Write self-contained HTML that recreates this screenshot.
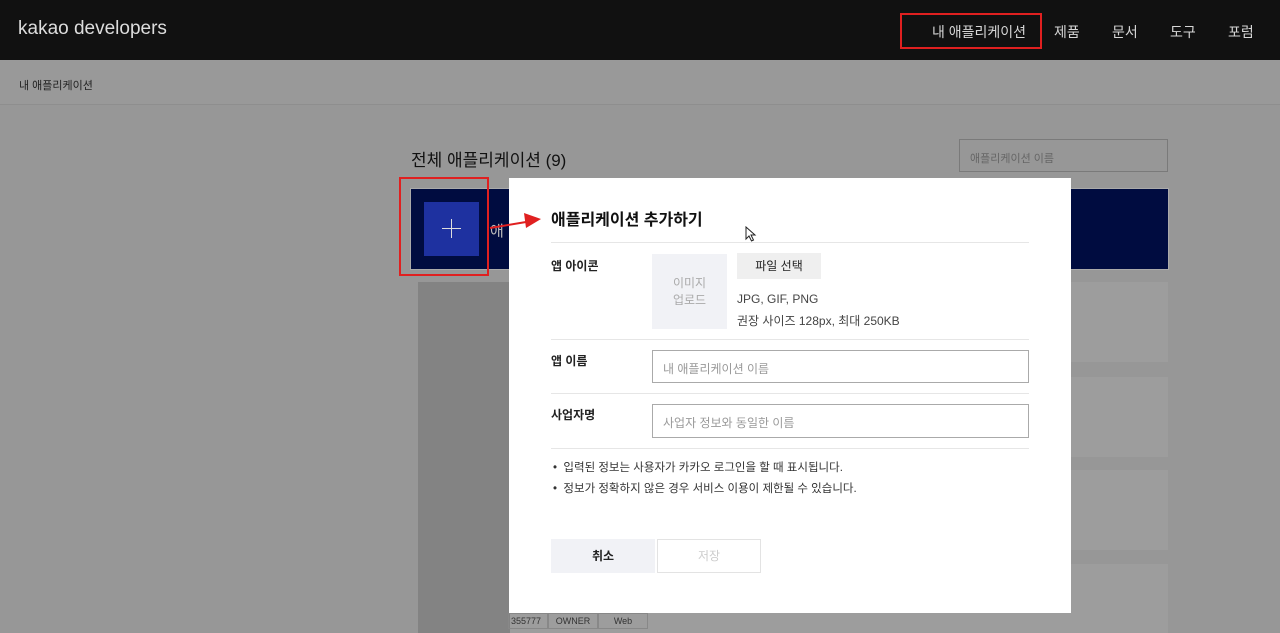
<!DOCTYPE html>
<html><head><meta charset="utf-8"><style>
*{margin:0;padding:0;box-sizing:border-box}
body{width:1280px;height:633px;overflow:hidden;background:#979797;font-family:"Liberation Sans","Noto Sans CJK KR",sans-serif;position:relative}
.a{position:absolute}
</style></head><body>
<div class="a" style="left:0;top:0;width:1280px;height:60px;background:#111"></div>
<div class="a" style="left:18px;top:18px;color:#ddd;font-size:19px;font-family:'Liberation Sans',sans-serif">kakao developers</div>
<div class="a" style="left:900px;top:13px;width:142px;height:36px;border:2px solid #e02020"></div>
<div class="a" style="left:932px;top:22px;color:#d6d6d6;font-size:14px">내 애플리케이션</div>
<div class="a" style="left:1054px;top:22px;color:#d6d6d6;font-size:14px">제품</div>
<div class="a" style="left:1112px;top:22px;color:#d6d6d6;font-size:14px">문서</div>
<div class="a" style="left:1170px;top:22px;color:#d6d6d6;font-size:14px">도구</div>
<div class="a" style="left:1228px;top:22px;color:#d6d6d6;font-size:14px">포럼</div>
<div class="a" style="left:0;top:60px;width:1280px;height:45px;background:#999;border-bottom:1px solid #8e8e8e"></div>
<div class="a" style="left:19px;top:77px;color:#222;font-size:11px">내 애플리케이션</div>
<div class="a" style="left:411px;top:146px;color:#111;font-size:17px">전체 애플리케이션 (9)</div>
<div class="a" style="left:959px;top:139px;width:209px;height:33px;border:1px solid #7a7a7a;color:#666;font-size:11px;padding:10px 10px">애플리케이션 이름</div>
<div class="a" style="left:410px;top:188px;width:759px;height:82px;background:#000c40;border:1px solid #aaa"></div>
<div class="a" style="left:424px;top:202px;width:55px;height:54px;background:#1e31a0"></div>
<div class="a" style="left:442px;top:228px;width:19px;height:1px;background:#ddd"></div>
<div class="a" style="left:451px;top:219px;width:1px;height:19px;background:#ddd"></div>
<div class="a" style="left:490px;top:220px;color:#bbb;font-size:15px">애</div>
<div class="a" style="left:399px;top:177px;width:90px;height:99px;border:2px solid #e02020"></div>
<div class="a" style="left:420px;top:282px;width:748px;height:80px;background:#9d9d9d"></div>
<div class="a" style="left:420px;top:377px;width:748px;height:80px;background:#9d9d9d"></div>
<div class="a" style="left:420px;top:470px;width:748px;height:80px;background:#9d9d9d"></div>
<div class="a" style="left:420px;top:564px;width:748px;height:69px;background:#9d9d9d"></div>
<div class="a" style="left:418px;top:282px;width:92px;height:351px;background:#838383"></div>
<div class="a" style="left:508px;top:613px;width:140px;height:16px;font-size:9px;color:#333;display:flex"><span style="width:40px;border:1px solid #888;padding:2px">355777</span><span style="width:50px;border:1px solid #888;padding:2px;text-align:center">OWNER</span><span style="width:50px;border:1px solid #888;padding:2px;text-align:center">Web</span></div>
<div class="a" style="left:509px;top:178px;width:562px;height:435px;background:#fff"></div>
<svg class="a" style="left:488px;top:206px" width="56" height="26"><line x1="2" y1="22" x2="38" y2="16" stroke="#e02020" stroke-width="2"/><polygon points="53,13 36,7 38,22" fill="#e02020"/></svg>
<div class="a" style="left:551px;top:206px;color:#111;font-size:16px;font-weight:bold">애플리케이션 추가하기</div>
<svg class="a" style="left:745px;top:226px" width="12" height="17"><path d="M1 1 L1 13 L4 10 L6.5 15 L8.5 14 L6 9 L10 9 Z" fill="#fff" stroke="#222" stroke-width="1"/></svg>
<div class="a" style="left:551px;top:242px;width:478px;height:1px;background:#e6e6e6"></div>
<div class="a" style="left:551px;top:257px;font-size:12px;font-weight:bold;color:#222">앱 아이콘</div>
<div class="a" style="left:652px;top:254px;width:75px;height:75px;background:#f1f2f6;color:#aaa;font-size:12px;text-align:center;padding-top:21px;line-height:17px">이미지<br>업로드</div>
<div class="a" style="left:737px;top:253px;width:84px;height:26px;background:#efefef;color:#222;font-size:12px;text-align:center;line-height:26px">파일 선택</div>
<div class="a" style="left:737px;top:292px;color:#444;font-size:12px">JPG, GIF, PNG</div>
<div class="a" style="left:737px;top:312px;color:#444;font-size:12px">권장 사이즈 128px, 최대 250KB</div>
<div class="a" style="left:551px;top:339px;width:478px;height:1px;background:#e6e6e6"></div>
<div class="a" style="left:551px;top:352px;font-size:12px;font-weight:bold;color:#222">앱 이름</div>
<div class="a" style="left:652px;top:350px;width:377px;height:33px;border:1px solid #aaa;color:#999;font-size:12px;padding:9px 10px">내 애플리케이션 이름</div>
<div class="a" style="left:551px;top:393px;width:478px;height:1px;background:#e6e6e6"></div>
<div class="a" style="left:551px;top:406px;font-size:12px;font-weight:bold;color:#222">사업자명</div>
<div class="a" style="left:652px;top:404px;width:377px;height:34px;border:1px solid #aaa;color:#999;font-size:12px;padding:9px 10px">사업자 정보와 동일한 이름</div>
<div class="a" style="left:551px;top:448px;width:478px;height:1px;background:#e6e6e6"></div>
<div class="a" style="left:553px;top:458px;color:#333;font-size:11.5px;line-height:21px">• &nbsp;입력된 정보는 사용자가 카카오 로그인을 할 때 표시됩니다.<br>• &nbsp;정보가 정확하지 않은 경우 서비스 이용이 제한될 수 있습니다.</div>
<div class="a" style="left:551px;top:539px;width:104px;height:34px;background:#f1f2f6;color:#222;font-size:12px;font-weight:bold;text-align:center;line-height:34px">취소</div>
<div class="a" style="left:657px;top:539px;width:104px;height:34px;border:1px solid #e3e3e3;color:#ccc;font-size:12px;text-align:center;line-height:32px">저장</div>
</body></html>
